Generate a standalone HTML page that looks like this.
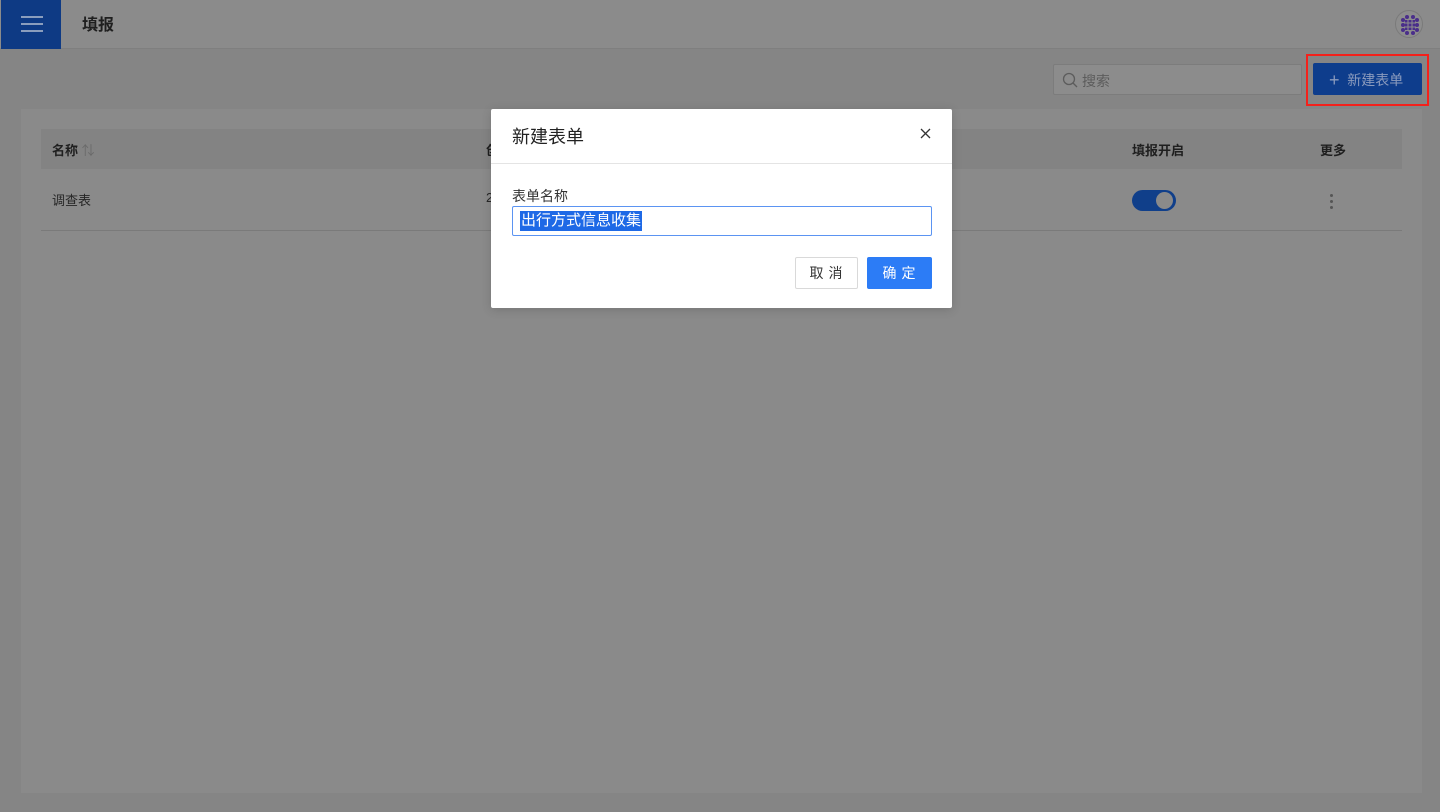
<!DOCTYPE html>
<html><head><meta charset="utf-8"><style>
*{box-sizing:border-box;margin:0;padding:0}
body{width:1440px;height:812px;overflow:hidden;background:#858585;font-family:"Liberation Sans","Noto Sans CJK SC",sans-serif;position:relative}
.hdr{position:absolute;left:0;top:0;width:1440px;height:49px;background:#8b8b8b;border-bottom:1px solid #7f7f7f}
.menu{position:absolute;left:1px;top:0;width:60px;height:49px;background:#0e3a84}
.menu i{position:absolute;left:20px;width:22px;height:2px;background:#8a9dbd}
.title{position:absolute;left:82px;top:11px;font-size:16px;font-weight:bold;color:#1f1f1f}
.avatar{position:absolute;left:1395px;top:10px;width:28px;height:28px;border-radius:50%;border:1px solid #7a7a7a;background:#8d8d8d}
.search{position:absolute;left:1053px;top:64px;width:249px;height:31px;border:1px solid #7c7c7c;border-radius:2px;background:#8c8c8c;font-size:14px;color:#5c5c5c;padding:6px 0 0 28px}
.btn{position:absolute;left:1313px;top:63px;width:109px;height:32px;background:#0e3d8c;border-radius:2px;color:#8a9abd;font-size:14px;padding:6px 0 0 16px}
.red{position:absolute;left:1306px;top:54px;width:123px;height:52px;border:2px solid #f4211b}
.card{position:absolute;left:21px;top:109px;width:1401px;height:684px;background:#8a8a8a}
.th{position:absolute;left:41px;top:129px;width:1361px;height:40px;background:#838383;font-size:13px;font-weight:bold;color:#1f1f1f}
.row{position:absolute;left:41px;top:169px;width:1361px;height:62px;border-bottom:1px solid #7a7a7a;font-size:13px;color:#262626}
.tog{position:absolute;left:1132px;top:190px;width:44px;height:21px;border-radius:11px;background:#103f8a}
.tog b{position:absolute;right:3px;top:2px;width:17px;height:17px;border-radius:50%;background:#8a8a8a}
.dlg{position:absolute;left:491px;top:109px;width:461px;height:199px;background:#fff;border-radius:2px;box-shadow:0 2px 10px rgba(0,0,0,.15)}
.dh{height:55px;border-bottom:1px solid #e4e4e4;font-size:18px;color:#222;padding:14px 0 0 21px}
.x{position:absolute;right:21px;top:19px}
.lbl{position:absolute;left:21px;top:77px;font-size:14px;color:#333}
.inp{position:absolute;left:21px;top:97px;width:420px;height:30px;border:1px solid #5b94f2;border-radius:2px}
.inp span{position:absolute;left:7px;top:4px;background:#1e69e6;color:#fff;font-size:15px;line-height:20px;padding:0 1px}
.cb{position:absolute;left:304px;top:148px;width:63px;height:32px;border:1px solid #d9d9d9;border-radius:2px;font-size:14px;color:#333;text-align:center;line-height:30px;letter-spacing:5px;padding-left:4px}
.ok{position:absolute;left:376px;top:148px;width:65px;height:32px;background:#2c7cf6;border-radius:2px;font-size:14px;color:#fff;text-align:center;line-height:32px;letter-spacing:5px;padding-left:4px}
.dot{position:absolute;left:1330px;width:3px;height:3px;border-radius:50%;background:#555}
</style></head><body>
<div class="hdr"><div class="menu"><i style="top:16px"></i><i style="top:23px"></i><i style="top:30px"></i></div>
<div class="title">填报</div>
<div class="avatar"><svg width="28" height="28" viewBox="0 0 28 28"><g fill="#4a2e8a"><rect x="9" y="9" width="10" height="10"/><circle cx="7" cy="9" r="2"/><circle cx="7" cy="14" r="2"/><circle cx="7" cy="19" r="2"/><circle cx="21" cy="9" r="2"/><circle cx="21" cy="14" r="2"/><circle cx="21" cy="19" r="2"/><circle cx="11" cy="6" r="2"/><circle cx="17" cy="6" r="2"/><circle cx="11" cy="22" r="2"/><circle cx="17" cy="22" r="2"/></g><path d="M12 9v10M16 9v10M9 12h10M9 16h10" stroke="#8d8d8d" stroke-width="1"/></svg></div></div>
<div class="search"><svg style="position:absolute;left:8px;top:7px" width="16" height="16" viewBox="0 0 16 16"><circle cx="7" cy="7" r="5.5" fill="none" stroke="#5c5c5c" stroke-width="1.3"/><path d="M11 11l4 4" stroke="#5c5c5c" stroke-width="1.3"/></svg>搜索</div>
<div class="btn"><span style="font-size:18px;position:relative;top:1px">+</span>&nbsp; 新建表单</div>
<div class="red"></div>
<div class="card"></div>
<div class="th"><span style="position:absolute;left:11px;top:11px">名称<span style="color:#6a6a6a;font-weight:normal"> ⇅</span></span><span style="position:absolute;left:445px;top:11px">创</span><span style="position:absolute;left:1091px;top:11px">填报开启</span><span style="position:absolute;left:1279px;top:11px">更多</span></div>
<div class="row"><span style="position:absolute;left:11px;top:21px">调查表</span><span style="position:absolute;left:445px;top:21px">2</span></div>
<div class="dot" style="top:194px"></div><div class="dot" style="top:200px"></div><div class="dot" style="top:206px"></div>
<div class="tog"><b></b></div>
<div class="dlg"><div class="dh">新建表单</div><svg class="x" width="11" height="11" viewBox="0 0 11 11"><path d="M1 1l9 9M10 1l-9 9" stroke="#333" stroke-width="1.3"/></svg>
<div class="lbl">表单名称</div><div class="inp"><span>出行方式信息收集</span></div>
<div class="cb">取消</div><div class="ok">确定</div></div>
</body></html>
